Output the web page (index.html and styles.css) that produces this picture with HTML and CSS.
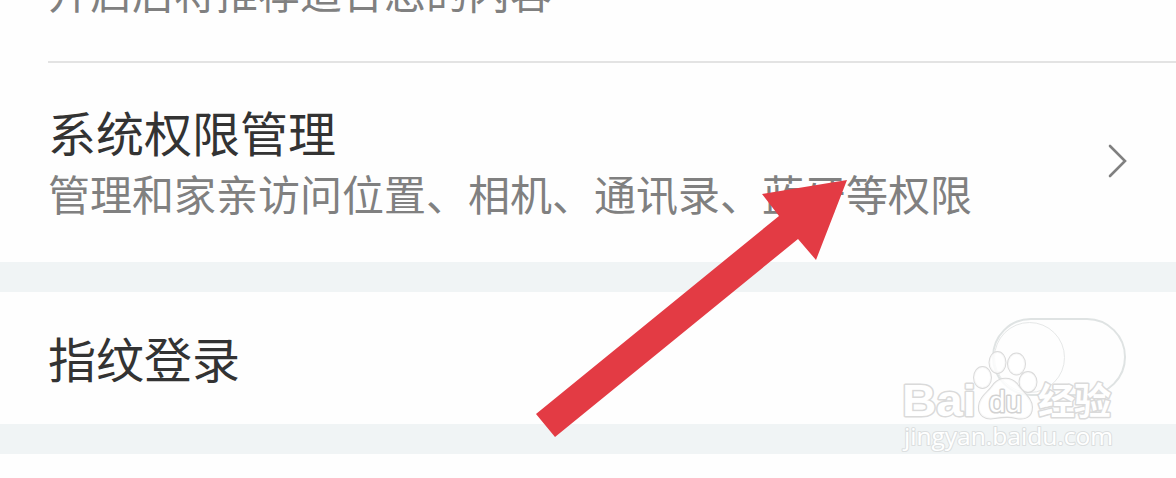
FILE: index.html
```html
<!DOCTYPE html>
<html lang="zh-CN">
<head>
<meta charset="utf-8">
<title>设置</title>
<link rel="stylesheet" href="styles.css">
</head>
<body>
<main class="screen">
  <section class="row row-recommend">
    <p class="desc">开启后将推荐适合您的内容</p>
  </section>
  <section class="row row-permission">
    <div class="label">
      <h2 class="title">系统权限管理</h2>
      <p class="desc">管理和家亲访问位置、相机、通讯录、蓝牙等权限</p>
    </div>
    <svg class="chevron" viewBox="0 0 20 36"><path d="M2 3 L17 18 L2 33"/></svg>
  </section>
  <div class="gap"></div>
  <section class="row row-login">
    <h2 class="title">指纹登录</h2>
    <div class="toggle"><span class="knob"></span></div>
  </section>
  <div class="gap"></div>

  <svg class="arrow" viewBox="0 0 1176 478"><path d="M847 180 L762 194 L779 216 L536 414 L555 437 L798 239 L816 260 Z"/></svg>

  <svg class="watermark" viewBox="0 0 226 116">
    <g class="brand">
      <text x="10" y="76" font-size="45" textLength="74" lengthAdjust="spacingAndGlyphs">Bai</text>
      <text class="hanzi" x="146" y="75" font-size="37" textLength="73">经验</text>
    </g>
    <g class="paw">
      <ellipse cx="90.500" cy="37.500" rx="8.500" ry="10.500"/>
      <ellipse cx="105.500" cy="22.500" rx="8" ry="10.500"/>
      <ellipse cx="124.500" cy="24" rx="8.500" ry="10.500"/>
      <ellipse cx="136" cy="42" rx="8.500" ry="10"/>
      <path d="M102 44 C108 37 119 37 125 44 C130 52 140 58 140 67 C140 77 133 80 124 78 C117 76 110 77 103 78 C93 80 86 75 87 66 C88 56 97 52 102 44 Z"/>
    </g>
    <text class="du" x="97" y="72" font-size="29" textLength="33" lengthAdjust="spacingAndGlyphs">du</text>
    <text class="url" x="12" y="105" font-size="24" textLength="209" lengthAdjust="spacingAndGlyphs">jingyan.baidu.com</text>
  </svg>
</main>
</body>
</html>
```
FILE: styles.css
```css
* { box-sizing: border-box; }
body {
  margin: 0;
  background: #fefefe;
  font-family: "Noto Sans CJK SC", sans-serif;
}
.screen {
  position: relative;
  width: 1176px;
  height: 478px;
  overflow: hidden;
}
.row {
  display: flex;
  align-items: center;
  justify-content: space-between;
}
.title, .desc {
  margin: 0;
  font-weight: 400;
  white-space: nowrap;
}
.title { font-size: 48px; line-height: 64px; color: #333; }
.desc { font-size: 42px; line-height: 58px; color: #808080; }
.row-recommend {
  height: 63px;
  margin-left: 48px;
  padding-bottom: 41px;
  align-items: flex-end;
  border-bottom: 2px solid #e3e3e3;
}
.row-permission {
  height: 199px;
  padding: 0 48px 3px;
}
.label { padding-bottom: 1px; }
.label .title { padding-bottom: 1px; }
.chevron {
  width: 20px;
  height: 36px;
  fill: none;
  stroke: #808080;
  stroke-width: 2.6;
  stroke-linecap: round;
}
.gap { height: 30px; background: #f0f4f5; }
.row-login {
  height: 132px;
  padding: 0 50px 3px 48px;
}
.toggle {
  width: 134px;
  height: 78px;
  padding: 2px 0;
  border: 2px solid #dfe3e3;
  border-radius: 39px;
}
.knob {
  display: block;
  width: 71px;
  height: 71px;
  border: 1px solid #e6e8e8;
  border-radius: 50%;
}
.arrow {
  position: absolute;
  inset: 0;
  width: 1176px;
  height: 478px;
  fill: #e33b44;
}
.watermark {
  position: absolute;
  left: 892px;
  top: 340px;
  width: 226px;
  height: 116px;
  fill: #fff;
  stroke: #dadada;
  stroke-linejoin: round;
  paint-order: stroke;
}
.brand {
  font-family: "Liberation Sans", sans-serif;
  font-weight: 700;
  stroke-width: 3;
}
.hanzi { font-family: "Noto Sans CJK SC", sans-serif; }
.paw { stroke-width: 2; fill-opacity: .8; }
.du {
  font-family: "Liberation Sans", sans-serif;
  stroke: #d2d2d2;
  stroke-width: 3;
}
.url {
  font-family: "Open Sans", sans-serif;
  font-weight: 400;
  stroke: #dcdfe0;
  stroke-width: 2;
}
```
